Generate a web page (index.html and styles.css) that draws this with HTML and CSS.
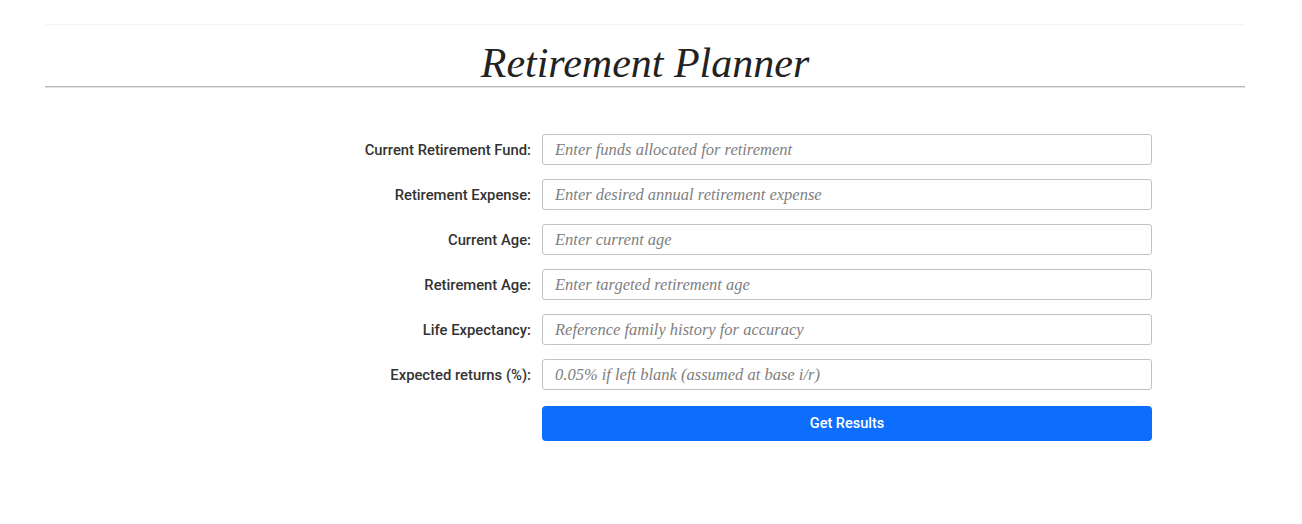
FILE: index.html
```html
<!DOCTYPE html>
<html lang="en">
<head>
<meta charset="utf-8">
<title>Retirement Planner</title>
<link rel="stylesheet" href="styles.css">
</head>
<body>
<div class="page">
  <header class="header">
    <h1 class="title">Retirement Planner</h1>
  </header>
  <form class="form">
    <label class="label" for="fund">Current Retirement Fund:</label>
    <input class="field" id="fund" type="text" placeholder="Enter funds allocated for retirement">
    <label class="label" for="expense">Retirement Expense:</label>
    <input class="field" id="expense" type="text" placeholder="Enter desired annual retirement expense">
    <label class="label" for="age">Current Age:</label>
    <input class="field" id="age" type="text" placeholder="Enter current age">
    <label class="label" for="rage">Retirement Age:</label>
    <input class="field" id="rage" type="text" placeholder="Enter targeted retirement age">
    <label class="label" for="life">Life Expectancy:</label>
    <input class="field" id="life" type="text" placeholder="Reference family history for accuracy">
    <label class="label" for="ret">Expected returns (%):</label>
    <input class="field" id="ret" type="text" placeholder="0.05% if left blank (assumed at base i/r)">
    <span></span>
    <button class="submit" type="button">Get Results</button>
  </form>
</div>
</body>
</html>
```
FILE: styles.css
```css
html, body {
  margin: 0;
  padding: 0;
  background: #ffffff;
}
.page {
  width: 1200px;
  margin-left: 45px;
  padding-top: 24px;
}
.header {
  border-top: 1px solid #f4f4f4;
  border-bottom: 1px solid #b9b9b9;
  box-shadow: 0 1px 0 #e2e2e2;
}
.title {
  margin: 15px 0 0;
  text-align: center;
  font-family: "Liberation Serif", "Times New Roman", serif;
  font-style: italic;
  font-weight: normal;
  font-size: 42px;
  line-height: 46px;
  color: #222;
}
.form {
  display: grid;
  grid-template-columns: 200px 610px;
  column-gap: 11px;
  row-gap: 14px;
  margin: 47px 0 0 286px;
  align-items: center;
}
.label {
  text-align: right;
  font-family: Roboto, "Liberation Sans", sans-serif;
  font-weight: 500;
  font-size: 14.8px;
  color: #333;
}
.field {
  box-sizing: border-box;
  height: 31px;
  width: 610px;
  margin: 0;
  padding: 0 12px;
  border: 1px solid #c2c2c2;
  border-radius: 3px;
  font-family: "Liberation Serif", "Times New Roman", serif;
  font-style: italic;
  font-size: 16.5px;
  color: #333;
  background: #fff;
}
.field::placeholder {
  color: #808080;
  opacity: 1;
}
.submit {
  margin-top: 2px;
  height: 35px;
  width: 610px;
  border: none;
  border-radius: 4px;
  background: #0d6efd;
  color: #fff;
  font-family: Roboto, "Liberation Sans", sans-serif;
  font-weight: 500;
  font-size: 14.5px;
  cursor: pointer;
}
```
